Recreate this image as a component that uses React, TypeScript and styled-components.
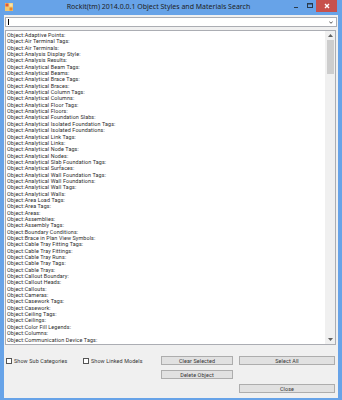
import styled, { createGlobalStyle } from "styled-components";

const GlobalStyle = createGlobalStyle`
    html, body {
        margin: 0;
        padding: 0;
        background: #ffffff;
    }
    * {
        box-sizing: border-box;
    }
`;

const Frame = styled.div`
    width: 342px;
    height: 400px;
    background: #67a3e8;
    display: flex;
    flex-direction: column;
    font-family: "Noto Sans", "Open Sans", sans-serif;
    overflow: hidden;
`;

const TitleBar = styled.div`
    height: 15px;
    display: flex;
    align-items: flex-start;
    position: relative;
`;

const AppIcon = styled.svg`
    margin: 3px 0 0 5px;
`;

const Title = styled.div`
    flex: 1;
    text-align: center;
    font-size: 7px;
    line-height: 14px;
    color: #1e1e1e;
    padding-left: 14px;
`;

const Controls = styled.div`
    display: flex;
    align-items: flex-start;
    margin-right: 5px;
`;

const CtrlButton = styled.div<{ $close?: boolean }>`
    width: ${(p) => (p.$close ? "21px" : "13px")};
    height: ${(p) => (p.$close ? "12px" : "11px")};
    background: ${(p) => (p.$close ? "#c7514c" : "transparent")};
    display: flex;
    align-items: center;
    justify-content: center;
`;

const Client = styled.div`
    flex: 1;
    margin: 0 4px 2px 4px;
    background: #f0f0f0;
    display: flex;
    flex-direction: column;
    padding: 2px 1px 0 1px;
`;

const Combo = styled.div`
    height: 10px;
    background: #ffffff;
    border: 1px solid #abadb3;
    display: flex;
    align-items: center;
    justify-content: space-between;
    padding: 0 3px 0 2px;
`;

const Caret = styled.div`
    width: 1px;
    height: 6px;
    background: #000000;
`;

const ListBox = styled.div`
    margin-top: 3px;
    height: 315px;
    background: #ffffff;
    border: 1px solid #abadb3;
    display: flex;
    margin-right: 1px;
`;

const Items = styled.div`
    flex: 1;
    padding: 1px 0 0 1px;
    overflow: hidden;
`;

const Item = styled.div`
    font-family: Roboto, "Noto Sans", sans-serif;
    font-size: 5.4px;
    letter-spacing: 0.12px;
    line-height: 6.35px;
    height: 6.35px;
    color: #2a2a2a;
    white-space: nowrap;
`;

const ScrollBar = styled.div`
    width: 10px;
    background: #f0f0f0;
    display: flex;
    flex-direction: column;
    align-items: center;
`;

const Arrow = styled.div`
    height: 9px;
    display: flex;
    align-items: center;
    justify-content: center;
`;

const Thumb = styled.div`
    width: 7px;
    height: 34px;
    background: #cdcdcd;
`;

const Spacer = styled.div`
    flex: 1;
`;

const Bottom = styled.div`
    display: grid;
    grid-template-columns: 77px 78px 78px 96px;
    grid-auto-rows: 9px;
    row-gap: 5px;
    margin-top: 11px;
    padding-left: 1px;
`;

const Check = styled.label`
    display: flex;
    align-items: center;
    gap: 2px;
    font-family: Roboto, "Noto Sans", sans-serif;
    font-size: 5.4px;
    letter-spacing: 0.12px;
    color: #333333;
    margin-top: 1px;
`;

const Box = styled.span`
    width: 6px;
    height: 6px;
    background: #ffffff;
    border: 1px solid #555555;
`;

const Button = styled.div<{ $col: number; $row: number; $w: number }>`
    grid-column: ${(p) => p.$col};
    grid-row: ${(p) => p.$row};
    width: ${(p) => p.$w}px;
    height: 9px;
    background: #e1e1e1;
    border: 1px solid #adadad;
    font-family: Roboto, "Noto Sans", sans-serif;
    font-size: 5.4px;
    letter-spacing: 0.12px;
    color: #333333;
    display: flex;
    align-items: center;
    justify-content: center;
`;

const items = [
    "Adaptive Points",
    "Air Terminal Tags",
    "Air Terminals",
    "Analysis Display Style",
    "Analysis Results",
    "Analytical Beam Tags",
    "Analytical Beams",
    "Analytical Brace Tags",
    "Analytical Braces",
    "Analytical Column Tags",
    "Analytical Columns",
    "Analytical Floor Tags",
    "Analytical Floors",
    "Analytical Foundation Slabs",
    "Analytical Isolated Foundation Tags",
    "Analytical Isolated Foundations",
    "Analytical Link Tags",
    "Analytical Links",
    "Analytical Node Tags",
    "Analytical Nodes",
    "Analytical Slab Foundation Tags",
    "Analytical Surfaces",
    "Analytical Wall Foundation Tags",
    "Analytical Wall Foundations",
    "Analytical Wall Tags",
    "Analytical Walls",
    "Area Load Tags",
    "Area Tags",
    "Areas",
    "Assemblies",
    "Assembly Tags",
    "Boundary Conditions",
    "Brace in Plan View Symbols",
    "Cable Tray Fitting Tags",
    "Cable Tray Fittings",
    "Cable Tray Runs",
    "Cable Tray Tags",
    "Cable Trays",
    "Callout Boundary",
    "Callout Heads",
    "Callouts",
    "Cameras",
    "Casework Tags",
    "Casework",
    "Ceiling Tags",
    "Ceilings",
    "Color Fill Legends",
    "Columns",
    "Communication Device Tags",
];

function App() {
    return (
        <>
            <GlobalStyle />
            <Frame>
                <TitleBar>
                    <AppIcon width="8" height="8" viewBox="0 0 8 8">
                        <rect x="0" y="0" width="8" height="8" fill="#f3c873" />
                        <rect x="0.5" y="0.5" width="3" height="3" fill="#e25a3a" />
                        <rect x="4.5" y="4.5" width="3" height="3" fill="#e8872e" />
                        <rect x="4.5" y="0.5" width="3" height="3" fill="#f6e2a8" />
                    </AppIcon>
                    <Title>Rockit(tm) 2014.0.0.1 Object Styles and Materials Search</Title>
                    <Controls>
                        <CtrlButton>
                            <svg width="5" height="7" viewBox="0 0 5 7">
                                <rect x="0" y="5" width="4" height="1" fill="#2a3a4a" />
                            </svg>
                        </CtrlButton>
                        <CtrlButton>
                            <svg width="6" height="6" viewBox="0 0 6 6">
                                <rect x="0.5" y="0.5" width="5" height="4" fill="none" stroke="#2a3a4a" />
                                <rect x="0.5" y="0.5" width="5" height="1" fill="#2a3a4a" />
                            </svg>
                        </CtrlButton>
                        <CtrlButton $close>
                            <svg width="6" height="6" viewBox="0 0 6 6">
                                <path d="M1 1 L5 5 M5 1 L1 5" stroke="#ffffff" strokeWidth="1.4" />
                            </svg>
                        </CtrlButton>
                    </Controls>
                </TitleBar>
                <Client>
                    <Combo>
                        <Caret />
                        <svg width="4" height="3" viewBox="0 0 4 3">
                            <path d="M0.3 0.5 L2 2.3 L3.7 0.5" fill="none" stroke="#444" strokeWidth="0.9" />
                        </svg>
                    </Combo>
                    <ListBox>
                        <Items>
                            {items.map((name) => (
                                <Item key={name}>Object:{name}:</Item>
                            ))}
                        </Items>
                        <ScrollBar>
                            <Arrow>
                                <svg width="5" height="3" viewBox="0 0 5 3">
                                    <path d="M0 3 L2.5 0 L5 3 Z" fill="#606060" />
                                </svg>
                            </Arrow>
                            <Thumb />
                            <Spacer />
                            <Arrow>
                                <svg width="5" height="3" viewBox="0 0 5 3">
                                    <path d="M0 0 L2.5 3 L5 0 Z" fill="#606060" />
                                </svg>
                            </Arrow>
                        </ScrollBar>
                    </ListBox>
                    <Bottom>
                        <Check>
                            <Box />
                            Show Sub Categories
                        </Check>
                        <Check>
                            <Box />
                            Show Linked Models
                        </Check>
                        <Button $col={3} $row={1} $w={72}>Clear Selected</Button>
                        <Button $col={4} $row={1} $w={96}>Select All</Button>
                        <Button $col={3} $row={2} $w={72}>Delete Object</Button>
                        <Button $col={4} $row={3} $w={96}>Close</Button>
                    </Bottom>
                </Client>
            </Frame>
        </>
    );
}

export default App;
